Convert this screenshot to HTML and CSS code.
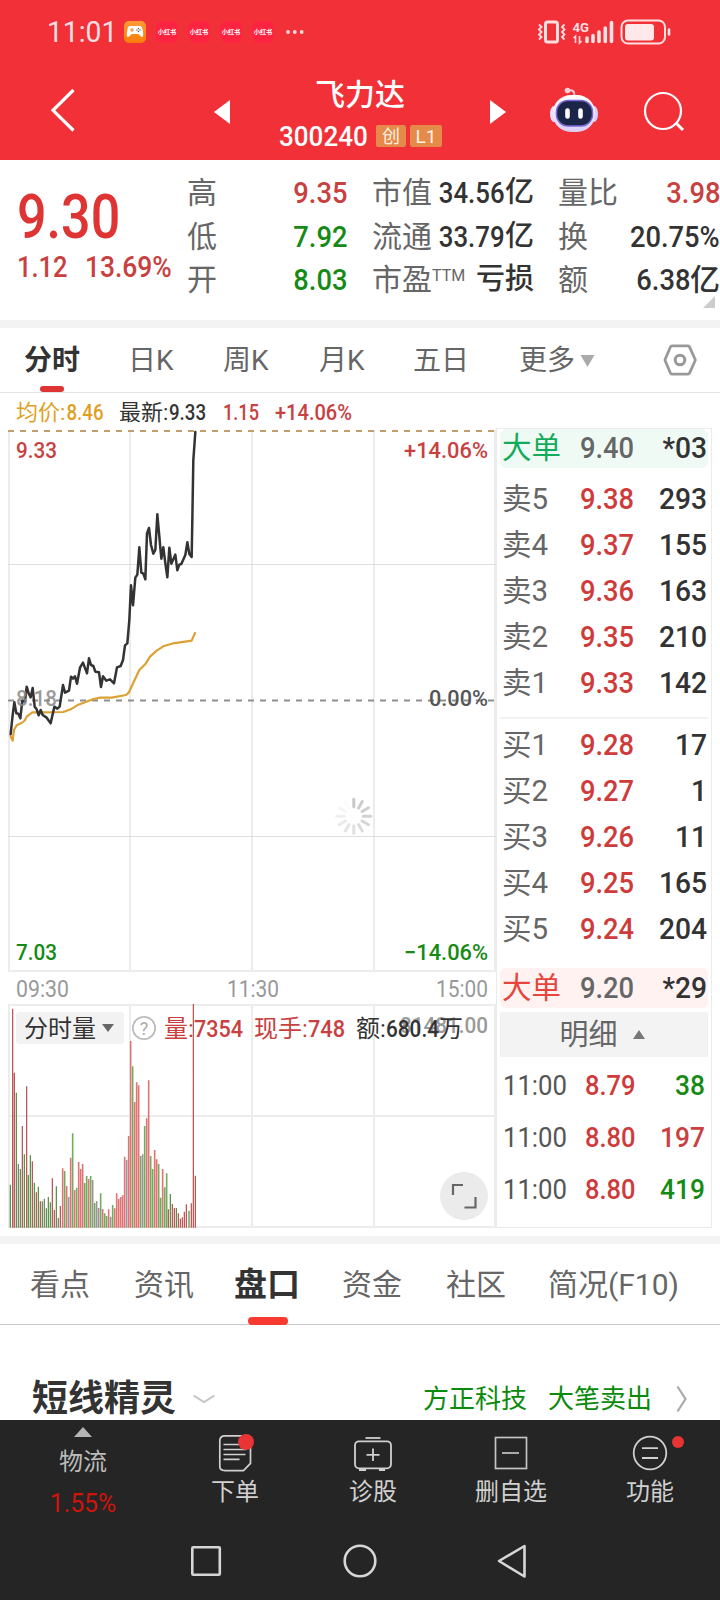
FILE: index.html
```html
<!DOCTYPE html>
<html lang="zh-CN">
<head>
<meta charset="utf-8">
<title>飞力达 300240</title>
<link rel="stylesheet" href="styles.css">
</head>
<body>
<div class="screen">
  <header class="top">
    <div class="status">
      <span class="clock">11:01</span>
      <svg class="game" width="22" height="22" viewBox="0 0 22 22"><defs><linearGradient id="og" x1="0" y1="0" x2="0" y2="1"><stop offset="0" stop-color="#ff9a35"/><stop offset="1" stop-color="#fb7d08"/></linearGradient></defs><rect width="22" height="22" rx="5" fill="url(#og)"/><path d="M6 5h10c2 0 2.500 2 3 6 .4 3 .2 5-1 5-1.500 0-2.500-3-4-3H8c-1.500 0-2.500 3-4 3-1.200 0-1.400-2-1-5 .5-4 1-6 3-6z" fill="#fff"/><path d="M6 9h4M8 7v4" stroke="#e88a2a" stroke-width="1"/><g fill="#555"><circle cx="14.500" cy="7.500" r=".7"/><circle cx="14.500" cy="10.500" r=".7"/><circle cx="13" cy="9" r=".7"/><circle cx="16" cy="9" r=".7"/></g></svg>
      <span class="app">小红书</span><span class="app">小红书</span><span class="app">小红书</span><span class="app">小红书</span>
      <svg class="dots" width="18" height="4" viewBox="0 0 18 4" fill="#ffd9db"><circle cx="2" cy="2" r="1.900"/><circle cx="8.800" cy="2" r="1.900"/><circle cx="15.700" cy="2" r="1.900"/></svg>
      <svg class="sys" width="134" height="26" viewBox="537 19 134 26" fill="none" stroke="#ffdfe1">
        <rect x="545.500" y="22" width="12" height="20" rx="2" stroke-width="3"/>
        <path d="M539 24.500l2.500 2.500-2.500 2.500 2.500 2.500-2.500 2.500 2.500 2.500-2.500 2.500M564.500 24.500L562 27l2.500 2.500L562 32l2.500 2.500L562 37l2.500 2.500" stroke-width="1.800"/>
        <path d="M573.500 38l2-1.800V43M579.500 36v7l2-2" stroke-width="1.600"/>
        <path d="M587 38v3.500M593 35.500v6M599 32v9.500M605.300 28v13.500M611.500 22.500v19" stroke-width="3.600" stroke-linecap="round"/>
        <rect x="621.500" y="20.500" width="43.500" height="23" rx="6.500" stroke-width="2"/>
        <rect x="625" y="24" width="29" height="16.500" rx="3" fill="#ffe8e9" stroke="none"/>
        <path d="M669 29.500v5" stroke-width="2.600" stroke-linecap="round"/>
        <text x="572.500" y="31.500" fill="#ffdfe1" stroke="none" font-size="13.500" font-weight="700" textLength="16.500" lengthAdjust="spacingAndGlyphs">4G</text>
      </svg>
    </div>
    <div class="nav">
      <svg class="back" width="26" height="44" viewBox="50 88 26 44"><path d="M73.500 90L53 110.300l20.500 20.200" fill="none" stroke="#fff" stroke-width="3.200"/></svg>
      <svg class="prev" width="16" height="24" viewBox="0 0 16 24"><path d="M16 0v24L0 12z" fill="#fff"/></svg>
      <div class="stock">
        <div class="name">飞力达</div>
        <div class="code"><span class="codenum">300240</span><span class="badge b1">创</span><span class="badge b2">L1</span></div>
      </div>
      <svg class="next" width="16" height="24" viewBox="0 0 16 24"><path d="M0 0v24l16-12z" fill="#fff"/></svg>
      <svg class="robot" width="50" height="46" viewBox="549 87 50 46">
        <defs><linearGradient id="rb" x1="0" y1="0" x2="0" y2="1"><stop offset="0" stop-color="#fff"/><stop offset="1" stop-color="#d9cdf5"/></linearGradient></defs>
        <path d="M568 90.500c5-1 6.500 1 6.500 5" fill="none" stroke="#f9c4d4" stroke-width="2"/><circle cx="567.500" cy="90.500" r="2.800" fill="#ffd0dc"/>
        <ellipse cx="554" cy="114" rx="4" ry="8" fill="#e6defa"/><ellipse cx="594" cy="114" rx="4" ry="8" fill="#d5d0fa"/>
        <rect x="552.500" y="95" width="43" height="37" rx="18.500" fill="url(#rb)"/>
        <rect x="556.500" y="100.500" width="36" height="25.500" rx="11.500" fill="#1b2547" stroke="#7a68d8" stroke-width="1.500"/>
        <path d="M567.500 110.500v6M580.500 110.500v6" stroke="#fff" stroke-width="4.600" stroke-linecap="round"/>
      </svg>
      <svg class="search" width="42" height="42" viewBox="643 91 42 42" fill="none" stroke="#fff" stroke-width="2.200"><circle cx="663" cy="111" r="18"/><path d="M675.500 122.500l7.500 7.500" stroke-width="3"/></svg>
    </div>
  </header>

  <section class="quote">
    <div class="price">
      <div class="big">9.30</div>
      <div class="chg"><span class="c1">1.12</span><span class="c2">13.69%</span></div>
    </div>
    <dl class="q q1">
      <dt>高</dt><dd class="red"><b>9.35</b></dd>
      <dt>低</dt><dd class="green"><b>7.92</b></dd>
      <dt>开</dt><dd class="green"><b>8.03</b></dd>
    </dl>
    <dl class="q q2">
      <dt>市值</dt><dd><b>34.56</b>亿</dd>
      <dt>流通</dt><dd><b>33.79</b>亿</dd>
      <dt>市盈<sup>TTM</sup></dt><dd>亏损</dd>
    </dl>
    <dl class="q q3">
      <dt>量比</dt><dd class="red"><b>3.98</b></dd>
      <dt>换</dt><dd><b>20.75%</b></dd>
      <dt>额</dt><dd><b>6.38</b>亿</dd>
    </dl>
    <i class="corner"></i>
  </section>

  <nav class="ktabs">
    <span class="on">分时</span><span>日K</span><span>周K</span><span>月K</span><span>五日</span><span>更多<svg width="15" height="12" viewBox="0 0 15 12"><path d="M.5 0h14L7.500 12z" fill="#aaa"/></svg></span>
    <svg class="hex" width="34" height="32" viewBox="663 344 34 32" fill="none" stroke="#999" stroke-width="2.800"><path d="M672 345.800h16q1 0 1.500 1l5.500 12.200q.5 1 0 2l-5.500 12.200q-.5 1-1.500 1h-16q-1 0-1.500-1L665.300 361q-.5-1 0-2l5.200-12.200q.5-1 1.500-1z"/><circle cx="680" cy="360" r="4.800" stroke-width="3"/></svg>
  </nav>

  <svg class="info" width="720" height="35" viewBox="0 393 720 35" font-size="22">
    <g fill="#dfa01f"><text x="16" y="420">均价:</text><text x="66.500" y="420" textLength="37" lengthAdjust="spacingAndGlyphs" font-weight="500">8.46</text></g>
    <g fill="#333"><text x="119" y="420">最新:</text><text x="169" y="420" textLength="37" lengthAdjust="spacingAndGlyphs" font-weight="500">9.33</text></g>
    <g fill="#c94040" font-weight="500"><text x="223" y="420" textLength="36" lengthAdjust="spacingAndGlyphs">1.15</text><text x="275" y="420" textLength="77" lengthAdjust="spacingAndGlyphs">+14.06%</text></g>
  </svg>

  <main class="trade">
    <svg class="chart" width="496" height="800" viewBox="0 428 496 800">
      <g stroke="#ececec" stroke-width="2" fill="none">
        <path d="M9 430V971M130 430V971M252 430V971M374 430V971M495 430V971M9 1004V1228M130 1004V1228M252 1004V1228M374 1004V1228M495 1004V1228"/>
        <path d="M8 971H496M8 1005H496M8 1116H496M8 1227H496"/>
        <path d="M8 564.500H496M8 836.500H496" stroke-width="1" stroke="#dedede"/>
      </g>
      <path d="M8 431H496" stroke="#bfa06c" stroke-width="1.800" stroke-dasharray="6 6"/>
      <path d="M8 700.500H496" stroke="#8f8f8f" stroke-width="1.800" stroke-dasharray="6 6"/>
      <g transform="translate(0 420) scale(.33333)" fill="none" stroke-linejoin="round" stroke-linecap="round">
        <path stroke="#dba133" stroke-width="6.500" d="M31 945L34 955L38 962L42 930L50 916L65 909L73 903L80 890L97 877L130 877L190 876L212 868L235 854L275 839L300 833L335 833L378 825L386 818L418 750L437 731L450 710L470 692L490 679L520 670L575 662L585 639"/>
        <path stroke="#333" stroke-width="7.500" d="M32 942L38 885L43 847L49 880L55 881L61 895L67 842L75 845L80 800L86 820L92 832L98 804L104 860L110 868L116 886L122 870L128 885L140 893L152 910L163 860L172 866L179 860L189 795L195 818L207 812L213 770L219 776L225 769L231 791L240 743L249 728L261 760L267 715L273 735L280 738L286 755L297 757L303 801L309 769L319 782L330 778L342 790L351 742L362 738L369 720L375 676L382 670L388 600L393 496L399 556L406 473L412 464L418 382L424 458L430 461L436 478L441 340L447 324L453 375L460 401L466 390L472 283L484 416L490 382L495 422L502 472L508 383L514 431L526 404L532 451L538 434L544 432L556 405L562 367L568 402L575 411L577 300L580 120L586 36"/>
      </g>
      <g transform="translate(0 960) scale(.33333)" fill="none">
        <g stroke-width="3.600">
          <path stroke="#b84c4c" d="M38 803V146M43 803V338M67 803V498M80 803V379M97 803V604M109 803V697M121 803V724M157 803V655M163 803V750M181 803V738M505 803V748M517 803V732M523 803V744M535 803V760M541 803V776M547 803V772M553 803V755M559 803V733M574 803V730M580 803V132M586 803V647"/>
          <path stroke="#4c8c3c" d="M31 803V674M49 803V398M61 803V627M73 803V583M85 803V645M91 803V586M103 803V668M115 803V680M127 803V724M139 803V745M145 803V711M151 803V727M169 803V679M511 803V702M529 803V744M567 803V752"/>
          <path stroke="#777" d="M55 803V612M133 803V716M175 803V774"/>
        </g>
        <g stroke-width="4.800">
          <path stroke="#df7474" d="M188 803V625M200 803V678M212 803V593M224 803V690M236 803V606M242 803V627M248 803V612M266 803V657M308 803V747M326 803V748M344 803V745M350 803V700M356 803V717M362 803V711M368 803V706M374 803V590M386 803V528M392 803V243M404 803V426M410 803V367M416 803V376M440 803V475M446 803V361M464 803V570M470 803V598M488 803V627"/>
          <path stroke="#74aa5f" d="M194 803V633M218 803V520M230 803V683M254 803V669M260 803V648M272 803V648M284 803V729M302 803V700M314 803V760M320 803V768M338 803V735M398 803V319M422 803V588M434 803V498M452 803V588M458 803V627M476 803V612M482 803V713M494 803V682M500 803V640"/>
          <path stroke="#9b9595" d="M206 803V711M278 803V660M290 803V723M296 803V744M332 803V770M380 803V600M428 803V583"/>
        </g>
      </g>
      <g font-size="22.500" font-weight="500">
        <text x="16" y="457.500" fill="#c94040" textLength="41" lengthAdjust="spacingAndGlyphs">9.33</text>
        <text x="404" y="457.500" fill="#c94040" textLength="84" lengthAdjust="spacingAndGlyphs">+14.06%</text>
        <text x="16" y="706" fill="#888" fill-opacity=".85" textLength="41" lengthAdjust="spacingAndGlyphs">8.18</text>
        <text x="429" y="706" fill="#555" textLength="59" lengthAdjust="spacingAndGlyphs">0.00%</text>
        <text x="16" y="959.500" fill="#158a15" textLength="41" lengthAdjust="spacingAndGlyphs">7.03</text>
        <text x="404" y="959.500" fill="#158a15" textLength="84" lengthAdjust="spacingAndGlyphs">−14.06%</text>
      </g>
      <g font-size="23.500" fill="#999">
        <text x="16" y="997" textLength="53" lengthAdjust="spacingAndGlyphs">09:30</text>
        <text x="227" y="997" textLength="52" lengthAdjust="spacingAndGlyphs">11:30</text>
        <text x="436" y="997" textLength="52" lengthAdjust="spacingAndGlyphs">15:00</text>
        <text x="400" y="1033" font-size="22.500" font-weight="500" textLength="88" lengthAdjust="spacingAndGlyphs">81481.00</text>
      </g>
      <rect x="16" y="1012" width="108" height="32" rx="4" fill="#f2f2f2"/>
      <text x="24" y="1036.500" font-size="24" fill="#333">分时量</text>
      <path d="M102 1024h12l-6 8z" fill="#666"/>
      <circle cx="144" cy="1028" r="11.200" fill="none" stroke="#bbb" stroke-width="1.700"/>
      <text x="144" y="1034.500" font-size="18" fill="#aaa" text-anchor="middle">?</text>
      <g font-size="24">
        <g fill="#c94040"><text x="164" y="1036.500">量:</text><text x="194" y="1036.500" textLength="49" lengthAdjust="spacingAndGlyphs" font-weight="500">7354</text><text x="254" y="1036.500">现手:</text><text x="308" y="1036.500" textLength="37" lengthAdjust="spacingAndGlyphs" font-weight="500">748</text></g>
        <g fill="#333"><text x="356" y="1036.500">额:</text><text x="386" y="1036.500" textLength="53" lengthAdjust="spacingAndGlyphs" font-weight="500">680.4</text><text x="439" y="1036.500">万</text></g>
      </g>
      <circle cx="464" cy="1196" r="24" fill="#ebebeb"/>
      <path d="M453 1195v-10h10M475.500 1197v10.500h-11" fill="none" stroke="#666" stroke-width="2.200"/>
      <g stroke="#bbb" stroke-width="3" stroke-linecap="round" transform="translate(353.800 816.300)">
        <path d="M0-9.500V-17" opacity=".8"/><path d="M0-9.500V-17" opacity=".75" transform="rotate(30)"/><path d="M0-9.500V-17" opacity=".7" transform="rotate(60)"/><path d="M0-9.500V-17" opacity=".65" transform="rotate(90)"/><path d="M0-9.500V-17" opacity=".6" transform="rotate(120)"/><path d="M0-9.500V-17" opacity=".52" transform="rotate(150)"/><path d="M0-9.500V-17" opacity=".45" transform="rotate(180)"/><path d="M0-9.500V-17" opacity=".38" transform="rotate(210)"/><path d="M0-9.500V-17" opacity=".3" transform="rotate(240)"/><path d="M0-9.500V-17" opacity=".22" transform="rotate(270)"/><path d="M0-9.500V-17" opacity=".12" transform="rotate(300)"/><path d="M0-9.500V-17" opacity=".06" transform="rotate(330)"/>
      </g>
    </svg>

    <section class="book">
      <div class="row large sell"><span>大单</span><b>9.40</b><em>*03</em></div>
      <div class="group asks">
        <div class="row"><span>卖5</span><b>9.38</b><em>293</em></div>
        <div class="row"><span>卖4</span><b>9.37</b><em>155</em></div>
        <div class="row"><span>卖3</span><b>9.36</b><em>163</em></div>
        <div class="row"><span>卖2</span><b>9.35</b><em>210</em></div>
        <div class="row"><span>卖1</span><b>9.33</b><em>142</em></div>
      </div>
      <div class="group bids">
        <div class="row"><span>买1</span><b>9.28</b><em>17</em></div>
        <div class="row"><span>买2</span><b>9.27</b><em>1</em></div>
        <div class="row"><span>买3</span><b>9.26</b><em>11</em></div>
        <div class="row"><span>买4</span><b>9.25</b><em>165</em></div>
        <div class="row"><span>买5</span><b>9.24</b><em>204</em></div>
      </div>
      <div class="row large buy"><span>大单</span><b>9.20</b><em>*29</em></div>
      <div class="detail">明细<svg width="12" height="9" viewBox="0 0 12 9"><path d="M0 9h12L6 0z" fill="#777"/></svg></div>
      <div class="ticks">
        <div class="row"><span>11:00</span><b>8.79</b><em class="green">38</em></div>
        <div class="row"><span>11:00</span><b>8.80</b><em class="red">197</em></div>
        <div class="row"><span>11:00</span><b>8.80</b><em class="green">419</em></div>
      </div>
    </section>
  </main>

  <nav class="tabs">
    <span>看点</span><span>资讯</span><span class="on">盘口</span><span>资金</span><span>社区</span><span class="f10">简况(F10)</span>
  </nav>
  <section class="wizard">
    <h2>短线精灵</h2>
    <svg class="down" width="24" height="12" viewBox="0 0 24 12"><path d="M1.500 2.500l10.500 6.500 10.500-6.500" fill="none" stroke="#c4c4c4" stroke-width="2"/></svg>
    <span class="g1">方正科技</span><span>大笔卖出</span>
    <svg class="right" width="12" height="28" viewBox="0 0 12 28"><path d="M1.500 1.500l8 12.500-8 12.500" fill="none" stroke="#aaa" stroke-width="2.200"/></svg>
  </section>

  <footer class="foot">
    <div class="bar">
      <div class="item first"><i class="up"></i><span>物流</span><strong>1.55%</strong></div>
      <div class="item"><svg width="44" height="40" viewBox="213 1433 44 40" fill="none" stroke="#d0d0d0" stroke-width="1.700"><path d="M225 1435.800h19q6.500 0 6.500 6v21.500l-7 7.300H225q-5.200 0-5.200-4v-26q0-4.800 5.200-4.800zM223.500 1444.500h18M223.500 1449.500h23M223.500 1454.500h22M223.500 1459.300h16"/><circle cx="246" cy="1442" r="8" fill="#e83434" stroke="none"/></svg><span>下单</span></div>
      <div class="item"><svg width="44" height="40" viewBox="351 1433 44 40" fill="none" stroke="#d0d0d0" stroke-width="1.800"><path d="M365.500 1438h15"/><rect x="355" y="1441.300" width="36" height="27" rx="4"/><path d="M366.500 1454.800h13M373 1448.500v12.500M359 1470h7M379 1470h6"/></svg><span>诊股</span></div>
      <div class="item"><svg width="44" height="40" viewBox="489 1433 44 40" fill="none" stroke="#c4c4c4" stroke-width="1.700"><rect x="495.500" y="1437.500" width="31" height="31"/><path d="M502 1453h17"/></svg><span>删自选</span></div>
      <div class="item"><svg width="68" height="40" viewBox="616 1433 68 40" fill="none" stroke="#d0d0d0" stroke-width="1.800"><circle cx="650" cy="1453" r="16.300"/><path d="M642 1448.200h16M642 1458h16"/><circle cx="678" cy="1442" r="6" fill="#e83434" stroke="none"/></svg><span>功能</span></div>
    </div>
    <svg class="sysnav" width="720" height="80" viewBox="0 1520 720 80" fill="none" stroke="#d6d6d6" stroke-width="2.600" stroke-linejoin="round"><rect x="192.300" y="1547.300" width="27.500" height="27.500" rx="1"/><circle cx="360" cy="1561" r="15.300"/><path d="M524.500 1546v30.500L499 1561z"/></svg>
  </footer>
</div>
</body>
</html>
```
FILE: styles.css
```css
* { box-sizing: border-box; }
body { margin: 0; background: #fff; }
.screen {
  width: 720px; height: 1600px; overflow: hidden;
  display: flex; flex-direction: column;
  font-family: Roboto, "Noto Sans CJK SC", sans-serif;
  color: #333; font-size: 30px; background: #fff;
}
svg { display: block; flex: none; }
b, em { font-weight: 500; font-style: normal; }
.red { color: #c94040; }
.green { color: #158a15; }

/* header */
.top { height: 160px; background: #f23038; color: #fff; }
.status { height: 64px; display: flex; align-items: center; padding-left: 47px; }
.clock { width: 77px; font-size: 30px; line-height: 66px; color: #ffdfe1; transform: scaleX(.94); transform-origin: left; }
.game { margin-right: 10px; }
.app {
  width: 22px; height: 22px; margin-right: 10px; border-radius: 6px; background: #fd2442;
  font-size: 6.2px; line-height: 22px; font-weight: 700; text-align: center; white-space: nowrap;
}
.dots { margin-left: 2px; }
.sys { margin-left: auto; margin-right: 49px; }
.nav { height: 96px; display: flex; align-items: flex-start; padding-left: 50px; }
.back { margin-top: 24px; }
.prev { margin: 36px 0 0 138px; }
.stock { width: 212px; margin-left: 24px; height: 96px; }
.next { margin: 36px 0 0 24px; }
.name { padding-left: 61px; font-size: 30px; line-height: 42px; margin-top: 10px; font-weight: 500; }
.code { display: flex; align-items: center; height: 36px; padding-left: 25px; margin-top: 2px; }
.codenum { width: 97px; font-size: 28px; font-weight: 500; transform: scaleX(.93); transform-origin: left; }
.badge { height: 22px; line-height: 23px; font-size: 18px; text-align: center; background: #e58a4a; border-radius: 2px; color: #fff3e4; }
.b1 { width: 30px; margin-right: 4px; }
.b2 { width: 32px; font-size: 19px; }
.robot { margin: 23px 0 0 43px; }
.search { margin: 27px 0 0 44px; }

/* quote */
.quote { position: relative; height: 168px; border-bottom: 8px solid #f3f3f3; display: flex; padding-top: 11px; }
.price { width: 187px; padding-left: 17px; }
.big { font-size: 62px; line-height: 64px; margin-top: 14px; font-weight: 500; color: #df3434; transform: scaleX(.84); transform-origin: left; }
.chg { display: flex; line-height: 37px; font-weight: 500; font-size: 29px; color: #c94040; }
.c1 { width: 68px; transform: scaleX(.88); transform-origin: left; }
.c2 { transform: scaleX(.91); transform-origin: left; }
.q { margin: 0; display: grid; grid-template-columns: 60px 1fr; grid-auto-rows: 43.5px; line-height: 43.5px; font-size: 30px; }
.q dt { color: #666; white-space: nowrap; }
.q dd { margin: 0; font-weight: 500; text-align: right; white-space: nowrap; }
.q b { display: inline-block; transform: scaleX(.91); transform-origin: right; }
.q sup { font-size: 16px; line-height: 0; vertical-align: 9px; }
.q1 { width: 160px; }
.q2 { width: 163px; margin-left: 25px; grid-template-columns: 54px 109px; }
.q2 dd { display: flex; justify-content: flex-end; padding-right: 1px; font-size: 29px; }
.q2 b { font-size: 30px; transform: scaleX(.86); }
.q3 { width: 162px; margin-left: 23px; }
.corner { position: absolute; right: 5px; bottom: 12px; border: 6px solid; border-color: transparent #ccc #ccc transparent; }

/* chart period tabs */
.ktabs { height: 65px; border-bottom: 1px solid #e4e4e4; display: grid; grid-template-columns: 128px 95px 96px 94px 106px 144px 34px; font-size: 28px; line-height: 64px; color: #666; }
.ktabs span { display: flex; align-items: center; gap: 5px; height: 64px; padding-top: 2px; }
.ktabs .on { position: relative; padding-left: 24px; font-weight: 700; color: #333; }
.ktabs .on::after { content: ""; position: absolute; left: 40px; bottom: 0; width: 24px; height: 6px; border-radius: 3px; background: #df3434; }
.hex { margin-top: 16px; }

/* chart and order book */
.trade { display: flex; height: 800px; }
.book { width: 216px; border: 1px solid #ebebeb; padding: 0 3px; }
.row { display: flex; height: 46px; line-height: 46px; padding: 0 1px 0 2px; }
.row span { width: 78px; color: #666; font-size: 29.500px; }
.row b { width: 64px; color: #cf3b3b; transform: scaleX(.91); transform-origin: left; }
.row em { flex: 1; text-align: right; transform: scaleX(.94); transform-origin: right; }
.large { height: 39px; line-height: 38px; border-radius: 6px; }
.large b { color: #666; }
.sell { background: #f0faf5; }
.sell span { color: #12ac5b; }
.buy { background: #fff2f1; margin-top: 16px; height: 40px; line-height: 40px; }
.buy span { color: #e5453d; }
.asks { padding-top: 1px; margin-top: 7px; height: 244px; border-bottom: 2px solid #f2f2f2; }
.bids { padding-top: 3px; }
.detail { margin-top: 4px; height: 45px; line-height: 46px; background: #f3f3f3; color: #666; display: flex; align-items: center; justify-content: center; gap: 15px; font-size: 29px; padding-right: 4px; }
.ticks { padding-top: 3px; font-size: 28px; }
.ticks .row { height: 52px; line-height: 52px; padding-right: 3px; }
.ticks span { font-size: 28px; color: #555; width: 83px; padding-left: 1px; transform: scaleX(.92); transform-origin: left; }
.ticks b { width: 60px; }

/* section tabs */
.tabs { margin-top: 8px; height: 89px; border-top: 8px solid #f3f3f3; border-bottom: 1px solid #c8c8c8; display: grid; grid-template-columns: 104px 100px 108px 104px 102px 151px; padding-left: 30px; font-size: 30px; line-height: 81px; color: #666; }
.tabs .on { position: relative; font-size: 33px; font-weight: 700; color: #333; }
.tabs .on::after { content: ""; position: absolute; left: 14px; bottom: 0; width: 40px; height: 8px; border-radius: 4px; background: #f93a30; }
.wizard { height: 95px; padding: 53px 32px 0 32px; display: flex; align-items: center; line-height: 44px; color: #0b8a0b; font-size: 26px; }
.wizard h2 { margin: 0; color: #333; font-size: 36px; font-weight: 700; }
.down { margin-left: 16px; }
.g1 { margin-left: auto; margin-right: 21px; }
.right { margin-left: 24px; }

/* bottom bar */
.foot { height: 180px; background: #252525; }
.bar { height: 100px; display: grid; grid-template-columns: 166px 138px 138px 138px 140px; font-size: 24px; color: #d0d0d0; }
.item { display: flex; flex-direction: column; align-items: center; padding-top: 13px; }
.item span { line-height: 38px; }
.first { padding-top: 7px; }
.first span { margin-top: 6px; color: #bbb; }
.first strong { margin-top: 4px; line-height: 36px; font-size: 26px; font-weight: 400; color: #d0140c; transform: scaleX(.95); }
.up { border: 9px solid transparent; border-top: 0; border-bottom: 10px solid #b5b5b5; }
```
